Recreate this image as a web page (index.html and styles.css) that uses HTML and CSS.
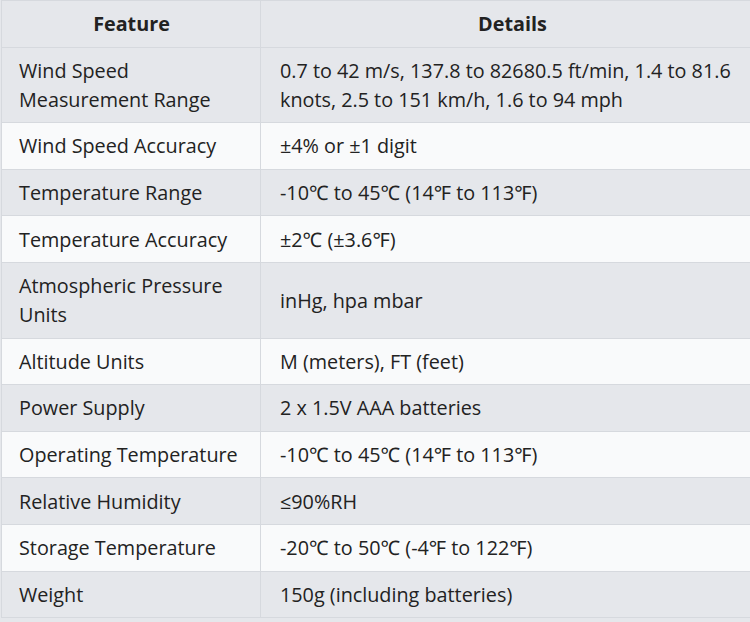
FILE: index.html
```html
<!DOCTYPE html>
<html lang="en">
<head>
<meta charset="utf-8">
<title>Specifications</title>
<link rel="stylesheet" href="styles.css">
</head>
<body>
<div class="frame">
<table class="specs">
  <colgroup><col class="c1"><col class="c2"></colgroup>
  <thead>
    <tr><th>Feature</th><th>Details</th></tr>
  </thead>
  <tbody>
    <tr><td>Wind Speed Measurement Range</td><td>0.7 to 42 m/s, 137.8 to 82680.5 ft/min, 1.4 to 81.6 knots, 2.5 to 151 km/h, 1.6 to 94 mph</td></tr>
    <tr><td>Wind Speed Accuracy</td><td>±4% or ±1 digit</td></tr>
    <tr><td>Temperature Range</td><td>-10℃ to 45℃ (14℉ to 113℉)</td></tr>
    <tr><td>Temperature Accuracy</td><td>±2℃ (±3.6℉)</td></tr>
    <tr><td>Atmospheric Pressure Units</td><td>inHg, hpa mbar</td></tr>
    <tr><td>Altitude Units</td><td>M (meters), FT (feet)</td></tr>
    <tr><td>Power Supply</td><td>2 x 1.5V AAA batteries</td></tr>
    <tr><td>Operating Temperature</td><td>-10℃ to 45℃ (14℉ to 113℉)</td></tr>
    <tr><td>Relative Humidity</td><td>≤90%RH</td></tr>
    <tr><td>Storage Temperature</td><td>-20℃ to 50℃ (-4℉ to 122℉)</td></tr>
    <tr><td>Weight</td><td>150g (including batteries)</td></tr>
  </tbody>
</table>
</div>
</body>
</html>
```
FILE: styles.css
```css
html, body {
  margin: 0;
  padding: 0;
  background: #e5e7eb;
}
.frame {
  width: 750px;
  height: 622px;
  overflow: hidden;
  padding-left: 1px;
  box-sizing: border-box;
}
.specs {
  width: 763px;
  table-layout: fixed;
  border-collapse: collapse;
  font-family: "Open Sans", "Noto Sans", "Liberation Sans", sans-serif;
  font-size: 19.8px;
  line-height: 29px;
  color: #222;
}
.c1 { width: 259px; }
.specs th,
.specs td {
  border: 1px solid #d6d9de;
  padding: 8.3px 16px 8.3px 17px;
  vertical-align: middle;
  text-align: left;
}
.specs th {
  font-weight: 700;
  text-align: center;
  background: #e5e7eb;
}
.specs tbody tr:nth-child(odd) td { background: #e5e7eb; }
.specs tbody tr:nth-child(even) td { background: #f9fafb; }
.specs td + td { padding-left: 19px; }
```
